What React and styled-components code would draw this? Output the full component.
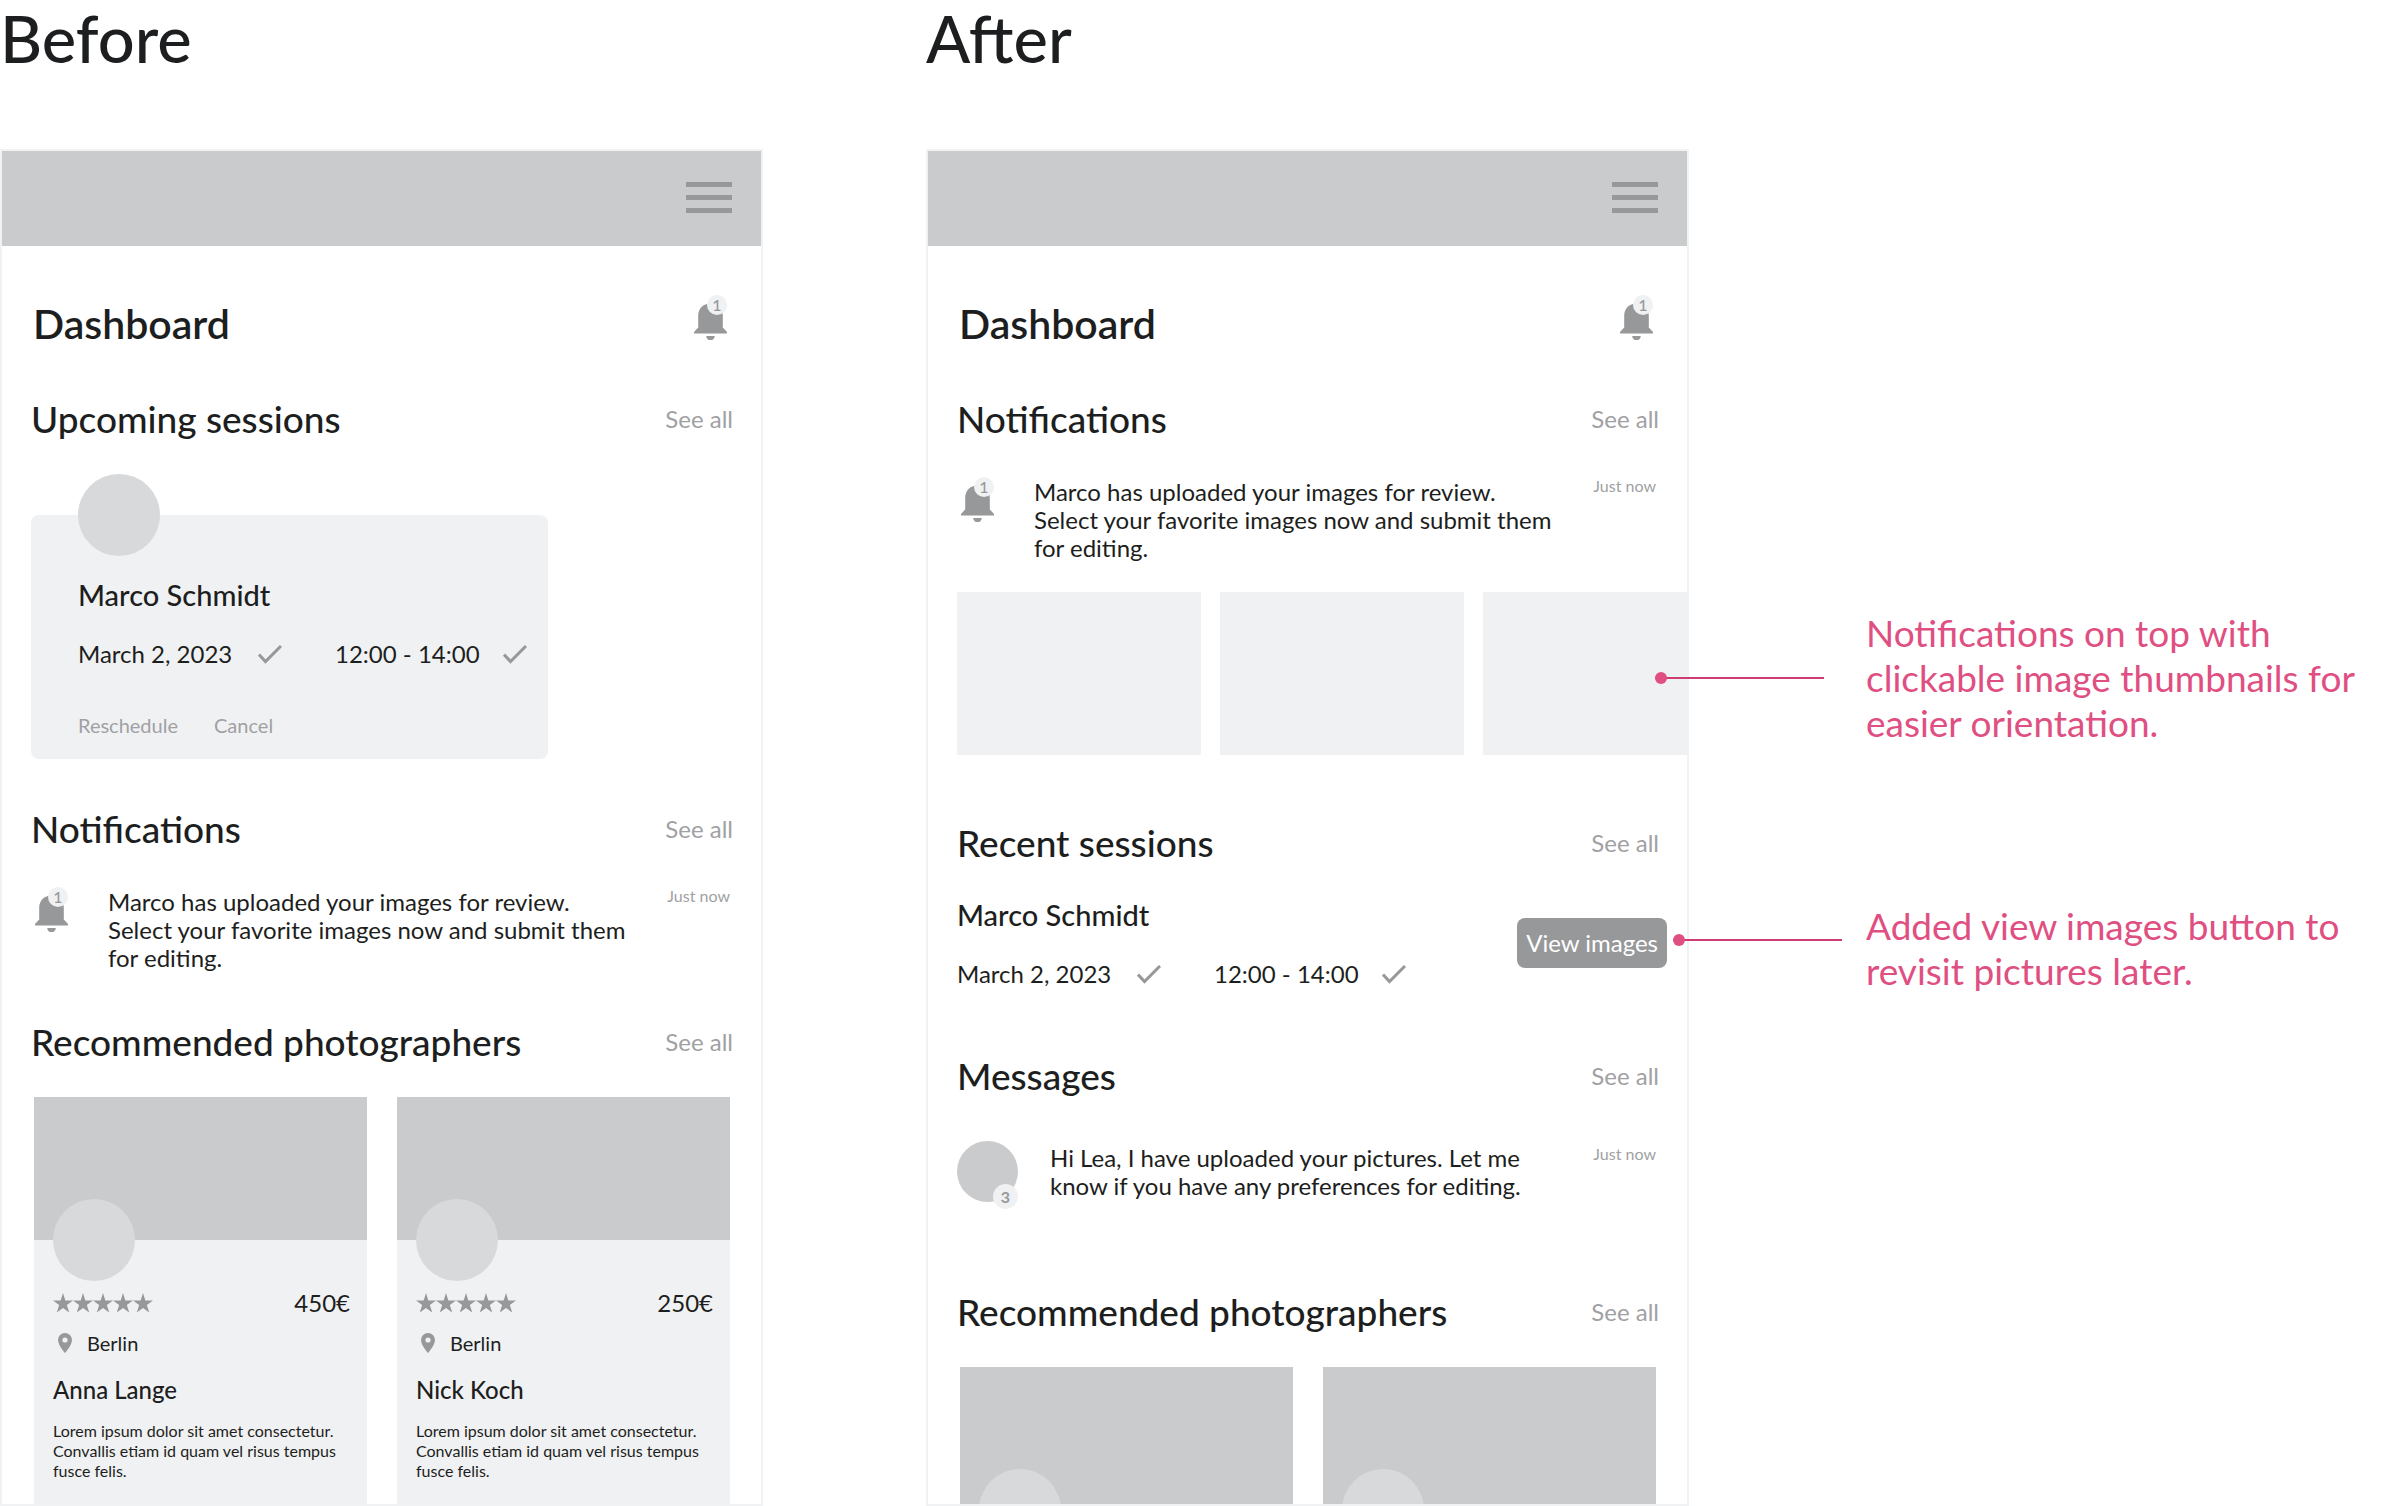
import React from "react";
import styled, { createGlobalStyle } from "styled-components";

const color = {
  ink: "#1d1e20",
  muted: "#a0a1a3",
  icon: "#97989a",
  bar: "#cacbcd",
  avatar: "#d8d9db",
  panel: "#f0f1f3",
  line: "#f1f2f3",
  pink: "#e04f82",
  pinkLine: "#cf3c74",
};

const GlobalStyle = createGlobalStyle`
  *, *::before, *::after { box-sizing: border-box; }
  body {
    margin: 0;
    background: #fff;
    color: ${color.ink};
    font-family: Lato, "Open Sans", sans-serif;
    font-size: 24px;
    line-height: 28px;
  }
  h1, h2, h3, h4, p { margin: 0; font-weight: 500; }
  button {
    margin: 0;
    padding: 0;
    border: 0;
    background: none;
    font: inherit;
    color: inherit;
    cursor: pointer;
  }
  a { color: inherit; text-decoration: none; }
  svg { display: block; }
`;

const Page = styled.main`
  display: grid;
  grid-template-columns: 763fr 763fr 548fr;
  column-gap: 163px;
  height: 100vh;
  overflow: hidden;
`;

const Column = styled.section`
  display: flex;
  flex-direction: column;
  min-width: 0;
  min-height: 0;
  gap: 73px;
`;

const ColumnTitle = styled.h1`
  font-size: 65px;
  line-height: 76px;
`;

const Phone = styled.article`
  flex: 1;
  min-height: 0;
  overflow: hidden;
  border: 2px solid ${color.line};
`;

const AppBar = styled.header`
  display: flex;
  align-items: center;
  justify-content: flex-end;
  height: 95px;
  padding: 0 29px 2px 0;
  background: ${color.bar};
`;

const Content = styled.div`
  padding: 48px 28px 0 29px;
`;

const TitleRow = styled.div`
  display: flex;
  align-items: flex-start;
  justify-content: space-between;
  padding: 0 5px 0 2px;
`;

const ScreenTitle = styled.h2`
  padding-top: 5px;
  font-size: 41px;
  font-weight: 600;
  line-height: 50px;
`;

const Section = styled.section`
  margin-top: ${(p) => p.$top || 48}px;
`;

const SectionHead = styled.div`
  display: flex;
  align-items: center;
  justify-content: space-between;
  margin-bottom: ${(p) => p.$gap || 33}px;
`;

const SectionTitle = styled.h3`
  font-size: 37px;
  line-height: 44px;
`;

const SeeAll = styled.a`
  color: ${color.muted};
`;

const Circle = styled.div`
  width: ${(p) => p.$size}px;
  height: ${(p) => p.$size}px;
  border-radius: 50%;
  background: ${(p) => p.$fill || color.avatar};
`;

const IconBox = styled.span`
  position: relative;
  display: block;
  flex: none;
`;

const Badge = styled.span`
  position: absolute;
  display: flex;
  align-items: center;
  justify-content: center;
  border-radius: 50%;
  background: ${color.panel};
  color: ${color.icon};
  font-size: 16px;
  font-weight: 500;
  line-height: 20px;
`;

const BellBadge = styled(Badge)`
  top: 1px;
  right: 1px;
  width: 20px;
  height: 20px;
`;

const CountBadge = styled(Badge)`
  right: 0;
  bottom: -7px;
  width: 25px;
  height: 25px;
  font-weight: 700;
`;

const SessionCard = styled.div`
  width: 517px;
  max-width: 100%;
  margin-top: 74px;
  padding: 0 0 22px 47px;
  border-radius: 8px;
  background: ${color.panel};
`;

const CardAvatar = styled(Circle)`
  position: relative;
  top: -41px;
  margin-bottom: -19px;
`;

const ClientName = styled.h4`
  margin-bottom: 28px;
  font-size: 29px;
  line-height: 34px;
`;

const Slots = styled.div`
  display: grid;
  grid-template-columns: 180px 77px 168px 24px;
  align-items: center;
`;

const Actions = styled.div`
  display: flex;
  gap: 36px;
  margin-top: 45px;
  color: ${color.muted};
  font-size: 20px;
  line-height: 24px;
`;

const SessionRow = styled.div`
  display: flex;
  align-items: flex-start;
  justify-content: space-between;
`;

const ViewButton = styled.button`
  height: 50px;
  margin: 20px -8px 0 0;
  padding: 0 9px;
  border-radius: 8px;
  background: ${color.icon};
  color: #fff;
`;

const Entry = styled.div`
  display: flex;
  align-items: flex-start;
  gap: 30px;
  padding: 0 3px 0 ${(p) => (p.$bell ? 4 : 0)}px;
`;

const EntryText = styled.p`
  flex: 1;
  padding: ${(p) => (p.$bell ? "2px 0 0 9px" : "3px 0 0 2px")};
  font-weight: 400;
`;

const When = styled.time`
  padding-top: ${(p) => (p.$bell ? 0 : 3)}px;
  color: ${color.muted};
  font-size: 16px;
  line-height: 20px;
`;

const Thumbs = styled.div`
  display: flex;
  gap: 19px;
  margin: 30px -28px 0 0;
  overflow: hidden;
`;

const Thumb = styled.button`
  flex: 0 0 244px;
  height: 163px;
  background: ${color.panel};
`;

const Photographers = styled.div`
  display: grid;
  grid-template-columns: 1fr 1fr;
  gap: 30px;
  padding: 0 3px;
`;

const Profile = styled.div`
  padding-bottom: 48px;
  background: ${color.panel};
`;

const Cover = styled.div`
  height: 143px;
  background: ${color.bar};
`;

const ProfileBody = styled.div`
  padding: 0 17px 0 19px;
`;

const ProfileAvatar = styled(Circle)`
  position: relative;
  margin-top: -41px;
`;

const RatingRow = styled.div`
  display: flex;
  align-items: center;
  justify-content: space-between;
  margin-top: 8px;
`;

const Stars = styled.div`
  display: flex;
`;

const Place = styled.div`
  display: flex;
  align-items: center;
  gap: 15px;
  margin-top: 14px;
  padding-left: 5px;
  font-size: 20px;
  line-height: 24px;
`;

const ProfileName = styled.h4`
  margin: 21px 0 17px;
  font-size: 24px;
  line-height: 28px;
`;

const Bio = styled.p`
  font-size: 16px;
  font-weight: 400;
  line-height: 20px;
`;

const Notes = styled.aside`
  display: flex;
  flex-direction: column;
  gap: 158px;
  padding: 610px 0 0 14px;
`;

const Note = styled.p`
  position: relative;
  color: ${color.pink};
  font-size: 37px;
  font-weight: 400;
  line-height: 45px;
`;

const Connector = styled.span`
  position: absolute;
  top: ${(p) => p.$top}px;
  right: calc(100% + ${(p) => p.$gap}px);
  width: 169px;
  height: 2px;
  background: ${color.pinkLine};

  &::before {
    content: "";
    position: absolute;
    top: -5px;
    left: 0;
    width: 12px;
    height: 12px;
    border-radius: 50%;
    background: ${color.pink};
  }
`;

const MenuIcon = () => (
  <svg width="46" height="31" viewBox="0 0 46 31" fill={color.icon} aria-hidden="true">
    <rect width="46" height="5" />
    <rect y="13" width="46" height="5" />
    <rect y="26" width="46" height="5" />
  </svg>
);

const Bell = () => (
  <IconBox>
    <svg width="34" height="46" viewBox="0 0 34 46" fill={color.icon} aria-hidden="true">
      <path d="M0 39.5v-1.6L4.2 33.5V22C4.2 14.5 9 9.5 16.5 9.5S28.8 14.5 28.8 22v11.5L33 37.900v1.6z" />
      <path d="M12.2 42h8.6a4.3 4.2 0 0 1-8.6 0z" />
    </svg>
    <BellBadge>1</BellBadge>
  </IconBox>
);

const Check = () => (
  <svg width="24" height="19" viewBox="0 0 24 19" fill="none" stroke={color.icon} strokeWidth="3" aria-hidden="true">
    <path d="M1 9.5l6.500 7L23 1" />
  </svg>
);

const Star = () => (
  <svg width="20" height="20" viewBox="0 0 20 20" fill={color.icon} aria-hidden="true">
    <path d="M10 0l2.350 7.4H20l-6.150 4.6 2.350 7.5L10 14.9l-6.2 4.6 2.350-7.5L0 7.4h7.650z" />
  </svg>
);

const Pin = () => (
  <svg width="14" height="20" viewBox="0 0 14 20" fill={color.icon} aria-hidden="true">
    <path
      fillRule="evenodd"
      d="M7 0a7 7 0 0 0-7 7c0 5.2 7 13 7 13s7-7.8 7-13a7 7 0 0 0-7-7zm0 9.6a2.6 2.6 0 1 1 0-5.2 2.6 2.6 0 0 1 0 5.2z"
    />
  </svg>
);

function Head({ title, gap }) {
  return (
    <SectionHead $gap={gap}>
      <SectionTitle>{title}</SectionTitle>
      <SeeAll href="#">See all</SeeAll>
    </SectionHead>
  );
}

function Screen({ title, children }) {
  return (
    <Column>
      <ColumnTitle>{title}</ColumnTitle>
      <Phone>
        <AppBar>
          <button type="button" aria-label="Menu">
            <MenuIcon />
          </button>
        </AppBar>
        <Content>
          <TitleRow>
            <ScreenTitle>Dashboard</ScreenTitle>
            <Bell />
          </TitleRow>
          {children}
        </Content>
      </Phone>
    </Column>
  );
}

const SessionSlots = () => (
  <Slots>
    <span>March 2, 2023</span>
    <Check />
    <span>12:00 - 14:00</span>
    <Check />
  </Slots>
);

const UploadNotice = () => (
  <Entry $bell>
    <Bell />
    <EntryText $bell>
      Marco has uploaded your images for review. Select your favorite images now and submit them for editing.
    </EntryText>
    <When $bell>Just now</When>
  </Entry>
);

const people = [
  { name: "Anna Lange", price: "450€" },
  { name: "Nick Koch", price: "250€" },
];

const ProfileDetails = ({ person }) => (
  <>
    <RatingRow>
      <Stars>
        {[1, 2, 3, 4, 5].map((n) => (
          <Star key={n} />
        ))}
      </Stars>
      <span>{person.price}</span>
    </RatingRow>
    <Place>
      <Pin />
      <span>Berlin</span>
    </Place>
    <ProfileName>{person.name}</ProfileName>
    <Bio>Lorem ipsum dolor sit amet consectetur. Convallis etiam id quam vel risus tempus fusce felis.</Bio>
  </>
);

const Recommended = ({ top, details }) => (
  <Section $top={top}>
    <Head title="Recommended photographers" />
    <Photographers>
      {people.map((person) => (
        <Profile key={person.name}>
          <Cover />
          <ProfileBody>
            <ProfileAvatar $size={82} />
            {details && <ProfileDetails person={person} />}
          </ProfileBody>
        </Profile>
      ))}
    </Photographers>
  </Section>
);

export default function App() {
  return (
    <>
      <GlobalStyle />
      <Page>
        <Screen title="Before">
          <Section>
            <Head title="Upcoming sessions" />
            <SessionCard>
              <CardAvatar $size={82} />
              <ClientName>Marco Schmidt</ClientName>
              <SessionSlots />
              <Actions>
                <button type="button">Reschedule</button>
                <button type="button">Cancel</button>
              </Actions>
            </SessionCard>
          </Section>
          <Section>
            <Head title="Notifications" gap={35} />
            <UploadNotice />
          </Section>
          <Recommended details />
        </Screen>

        <Screen title="After">
          <Section>
            <Head title="Notifications" gap={35} />
            <UploadNotice />
            <Thumbs>
              <Thumb type="button" aria-label="Image 1" />
              <Thumb type="button" aria-label="Image 2" />
              <Thumb type="button" aria-label="Image 3" />
            </Thumbs>
          </Section>
          <Section $top={66}>
            <Head title="Recent sessions" />
            <SessionRow>
              <div>
                <ClientName>Marco Schmidt</ClientName>
                <SessionSlots />
              </div>
              <ViewButton type="button">View images</ViewButton>
            </SessionRow>
          </Section>
          <Section $top={66}>
            <Head title="Messages" gap={43} />
            <Entry>
              <IconBox>
                <Circle $size={61} $fill={color.bar} />
                <CountBadge>3</CountBadge>
              </IconBox>
              <EntryText>
                Hi Lea, I have uploaded your pictures. Let me know if you have any preferences for editing.
              </EntryText>
              <When>Just now</When>
            </Entry>
          </Section>
          <Recommended top={88} />
        </Screen>

        <Notes>
          <Note>
            <Connector $top={67} $gap={42} />
            Notifications on top with clickable image thumbnails for easier orientation.
          </Note>
          <Note>
            <Connector $top={36} $gap={24} />
            Added view images button to revisit pictures later.
          </Note>
        </Notes>
      </Page>
    </>
  );
}
